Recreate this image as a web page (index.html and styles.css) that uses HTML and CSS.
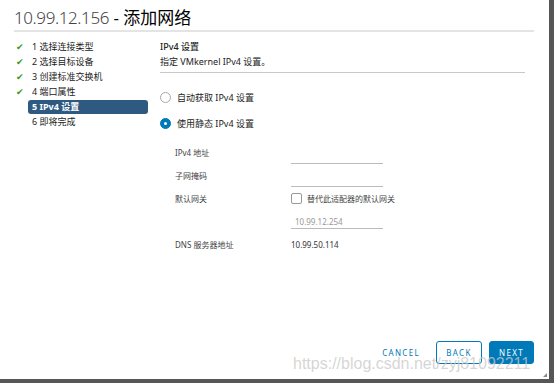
FILE: index.html
```html
<!DOCTYPE html>
<html lang="zh-CN">
<head>
    <meta charset="UTF-8">
    <title>添加网络</title>
    <link rel="stylesheet" href="styles.css">
</head>
<body>
<div class="dialog">
    <div class="title"><span class="host">10.99.12.156</span> - 添加网络</div>

    <div class="main">
        <!-- steps -->
        <ul class="steps">
            <li><span class="check">&#10004;</span><span class="step">1 选择连接类型</span></li>
            <li><span class="check">&#10004;</span><span class="step">2 选择目标设备</span></li>
            <li><span class="check">&#10004;</span><span class="step">3 创建标准交换机</span></li>
            <li><span class="check">&#10004;</span><span class="step">4 端口属性</span></li>
            <li><span class="check"></span><span class="step active">5 IPv4 设置</span></li>
            <li><span class="check"></span><span class="step">6 即将完成</span></li>
        </ul>

        <!-- page -->
        <div class="page">
            <div class="page-head">
                <div class="page-title">IPv4 设置</div>
                <div class="page-desc">指定 VMkernel IPv4 设置。</div>
            </div>

            <div class="radio-row first"><span class="radio"></span>自动获取 IPv4 设置</div>
            <div class="radio-row"><span class="radio on"></span>使用静态 IPv4 设置</div>

            <div class="form">
                <div class="label">IPv4 地址</div>
                <div class="field"><div class="line"></div></div>

                <div class="label">子网掩码</div>
                <div class="field"><div class="line"></div></div>

                <div class="label">默认网关</div>
                <div class="field"><span class="box"></span>替代此适配器的默认网关</div>

                <div class="label"></div>
                <div class="field"><div class="line gw">10.99.12.254</div></div>

                <div class="label">DNS 服务器地址</div>
                <div class="field dns">10.99.50.114</div>
            </div>
        </div>
    </div>

    <div class="footer">
        <button class="btn link">CANCEL</button>
        <button class="btn outline">BACK</button>
        <button class="btn primary">NEXT</button>
    </div>

    <div class="mark">https://blog.csdn.net/zyj81092211</div>
    <div class="grip"></div>
</div>
</body>
</html>
```

FILE: styles.css
```css
body {
    margin: 0;
    background-color: #565656;
    font-family: "Noto Sans", "Noto Sans CJK SC", sans-serif;
    color: #333;
}

.dialog {
    position: relative;
    width: 549px;
    height: 379px;
    background-color: #fff;
    display: flex;
    flex-direction: column;
    overflow: hidden;
}

.title {
    margin: 0 15px 0 14px;
    padding-top: 6px;
    height: 24px;
    font-size: 17px;
    line-height: 24px;
    color: #000;
    border-bottom: 2px solid #e4e4e4;
}

.host {
    font-weight: 300;
    color: #444;
    letter-spacing: -0.4px;
}

.main {
    display: flex;
    flex: 1;
}

.steps {
    list-style-type: none;
    margin: 7px 0 0 0;
    padding: 0 0 0 16px;
    width: 132px;
}

.steps li {
    display: flex;
    align-items: center;
    height: 15px;
    font-size: 9px;
    color: #222;
}

.check {
    width: 12px;
    color: #3c9a2a;
    font-size: 9px;
}

.step {
    flex: 1;
    padding-left: 4px;
    line-height: 14px;
}

.step.active {
    background-color: #2e5a82;
    color: #fff;
    font-weight: bold;
    border-radius: 3px;
}

.page {
    flex: 1;
    padding-left: 12px;
    padding-top: 7px;
}

.page-head {
    width: 365px;
    border-bottom: 1px solid #c8c8c8;
    padding-bottom: 3px;
    font-size: 9px;
    line-height: 15px;
    color: #222;
}

.page-title {
    font-weight: 500;
}

.radio-row {
    display: flex;
    align-items: center;
    height: 26px;
    font-size: 9px;
    color: #222;
}

.radio-row.first {
    margin-top: 11px;
}

.radio {
    width: 9px;
    height: 9px;
    border: 1px solid #a8a8a8;
    border-radius: 50%;
    margin-right: 6px;
    box-sizing: content-box;
}

.radio.on {
    border-color: #0079b8;
    background-color: #0079b8;
    position: relative;
}

.radio.on::after {
    content: "";
    position: absolute;
    left: 3px;
    top: 3px;
    width: 3px;
    height: 3px;
    border-radius: 50%;
    background-color: #fff;
}

.form {
    display: grid;
    grid-template-columns: 116px 150px;
    grid-auto-rows: 23px;
    margin-top: 5px;
    margin-left: 15px;
    font-size: 8px;
    color: #444;
}

.label,
.field {
    display: flex;
    align-items: center;
    white-space: nowrap;
}

.line {
    width: 92px;
    height: 14px;
    border-bottom: 1px solid #bbb;
    margin-top: 8px;
}

.line.gw {
    margin-top: 0;
    padding-left: 4px;
    box-sizing: border-box;
    color: #999;
    line-height: 14px;
}

.box {
    width: 9px;
    height: 9px;
    border: 1px solid #999;
    border-radius: 2px;
    margin-right: 5px;
}

.field.dns {
    color: #333;
}

.footer {
    display: flex;
    justify-content: flex-end;
    gap: 7px;
    padding: 0 15px 15px 0;
}

.btn {
    font-family: "Noto Sans", sans-serif;
    font-size: 8px;
    letter-spacing: 1.3px;
    height: 23px;
    padding: 0;
    border-radius: 3px;
    cursor: pointer;
}

.btn.link {
    background: none;
    border: none;
    color: #0079b8;
    width: 50px;
    margin-right: 3px;
}

.btn.outline {
    width: 46px;
    background-color: #fff;
    border: 1px solid #0079b8;
    color: #0079b8;
}

.btn.primary {
    width: 45px;
    background-color: #0079b8;
    border: 1px solid #0079b8;
    color: #fff;
}

.mark {
    position: absolute;
    left: 293px;
    top: 355px;
    font-family: "Liberation Sans", sans-serif;
    font-size: 16px;
    color: rgba(200, 200, 200, 0.75);
    white-space: nowrap;
}

.grip {
    position: absolute;
    right: 2px;
    bottom: 2px;
    width: 0;
    height: 0;
    border-left: 4px solid transparent;
    border-bottom: 4px solid #888;
}
```
